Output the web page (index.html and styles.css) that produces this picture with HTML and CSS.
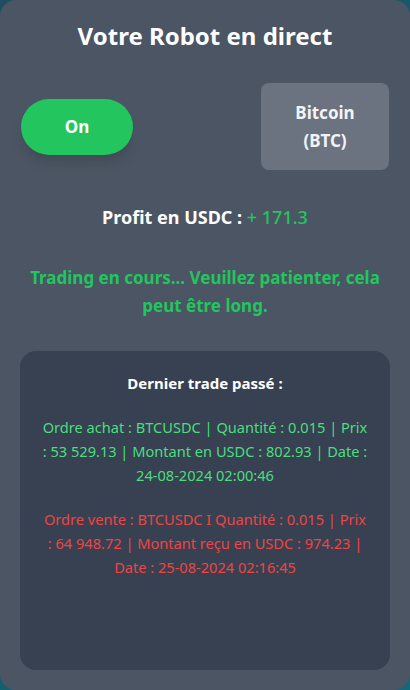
FILE: index.html
```html
<!DOCTYPE html>
<html lang="fr">
<head>
    <meta charset="UTF-8">
    <meta name="viewport" content="width=device-width, initial-scale=1.0">
    <title>Votre Robot en direct</title>
    <link rel="stylesheet" href="styles.css">
</head>
<body>
    <div class="card">
        <h1>Votre Robot en direct</h1>

        <div class="controls">
            <button class="toggle">On</button>
            <div class="pair">Bitcoin<br>(BTC)</div>
        </div>

        <p class="profit">Profit en USDC : <span class="gain">+ 171.3</span></p>

        <p class="status">Trading en cours... Veuillez patienter, cela peut être long.</p>

        <div class="last-trade">
            <h2>Dernier trade passé :</h2>
            <p class="buy">Ordre achat : BTCUSDC | Quantité : 0.015 | Prix : 53 529.13 | Montant en USDC : 802.93 | Date : 24-08-2024 02:00:46</p>
            <p class="sell">Ordre vente : BTCUSDC I Quantité : 0.015 | Prix : 64 948.72 | Montant reçu en USDC : 974.23 | Date : 25-08-2024 02:16:45</p>
        </div>
    </div>
</body>
</html>
```

FILE: styles.css
```css
* {
    box-sizing: border-box;
}
body {
    margin: 0;
    background: linear-gradient(135deg, #1d4f5e, #0f6a7a);
    font-family: "Noto Sans", "Open Sans", sans-serif;
    color: #fff;
}
.card {
    display: flex;
    flex-direction: column;
    height: 690px;
    padding: 20px;
    background-color: #4b5563;
    border-radius: 16px;
    text-align: center;
}
h1 {
    margin: 0;
    font-size: 24px;
    line-height: 32px;
    font-weight: 700;
}
.controls {
    display: flex;
    align-items: center;
    justify-content: space-between;
    margin-top: 31px;
}
.toggle {
    width: 112px;
    height: 56px;
    margin-left: 1px;
    border: none;
    border-radius: 9999px;
    background-color: #22c55e;
    color: #fff;
    font-family: inherit;
    font-size: 17px;
    font-weight: 700;
    box-shadow: 0 10px 15px -3px rgba(0,0,0,0.1), 0 4px 6px -4px rgba(0,0,0,0.1);
}
.pair {
    width: 128px;
    height: 87px;
    margin-right: 1px;
    display: flex;
    align-items: center;
    justify-content: center;
    background-color: #6b7280;
    border-radius: 8px;
    color: #f3f4f6;
    font-size: 17px;
    font-weight: 700;
    line-height: 28px;
}
.profit {
    margin: 33px 0 0;
    font-size: 18px;
    line-height: 28px;
    font-weight: 700;
}
.gain {
    color: #22c55e;
    font-weight: 500;
}
.status {
    margin: 33px 0 0;
    color: #22c55e;
    font-size: 17px;
    line-height: 28px;
    font-weight: 700;
}
.last-trade {
    flex: 1;
    margin-top: 31px;
    padding: 20px 21px;
    background-color: #374151;
    border-radius: 16px;
}
.last-trade h2 {
    margin: 0;
    font-size: 15px;
    line-height: 24px;
    font-weight: 700;
}
.last-trade p {
    margin: 20px 0 0;
    font-size: 14.6px;
    line-height: 24px;
}
.buy {
    color: #4ade80;
}
.sell {
    color: #ef4444;
}
```
